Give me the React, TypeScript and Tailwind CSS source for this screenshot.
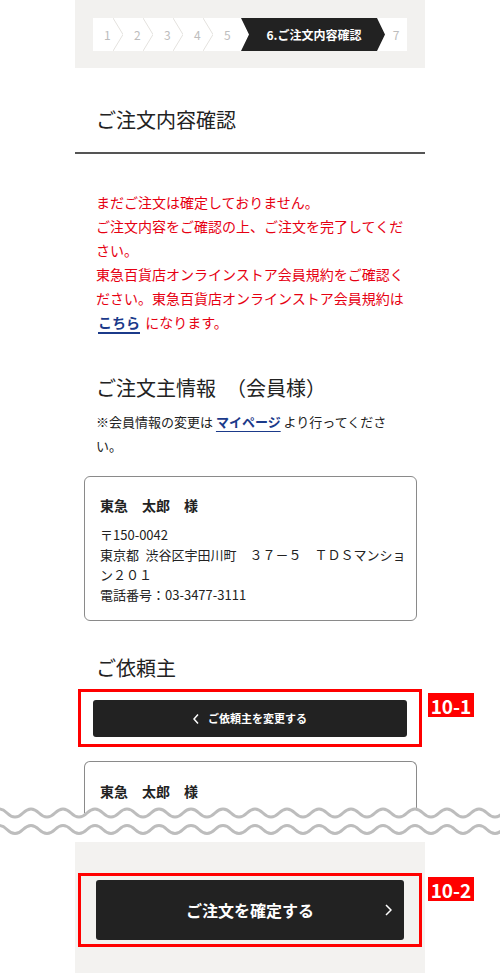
import { FC } from "react";

const StepChevron: FC = () => (
  <svg width="10" height="33" viewBox="0 0 10 33" className="shrink-0">
    <polyline points="0,0 10,16.5 0,33" fill="none" stroke="#e4e2de" strokeWidth="1" />
  </svg>
);

const wave = (y: number, x0: number) => {
  let d = `M${x0} ${y} Q${x0 + 8} ${y - 8} ${x0 + 16} ${y}`;
  for (let x = x0 + 32; x <= 530; x += 16) d += ` T${x} ${y}`;
  return d;
};

const Label: FC<{ text: string }> = ({ text }) => (
  <div className="absolute left-[calc(100%+9px)] top-[1px] flex h-[24px] w-[46px] items-center justify-center bg-[#ff0000] text-[19px] font-bold leading-none text-white">
    {text}
  </div>
);

export default function App() {
  return (
    <div className="min-h-[973px] w-[500px] bg-white font-['Noto_Sans_CJK_JP',sans-serif] text-[#222]">
      <div className="mx-auto w-[350px]">
        {/* stepper */}
        <div className="h-[68px] bg-[#f2f1ef] px-[18px] pt-[18px]">
          <div className="flex h-[33px] bg-white">
            {[1, 2, 3, 4].map((n) => (
              <div key={n} className="flex">
                <span className="w-[20px] pl-[11px] text-[12px] leading-[33px] text-[#bdbdbd]">{n}</span>
                <StepChevron />
              </div>
            ))}
            <span className="w-[28px] pl-[11px] text-[12px] leading-[33px] text-[#bdbdbd]">5</span>
            <div className="flex w-[144px] items-center justify-center bg-[#222] pl-[2px] text-[12px] font-bold text-white [clip-path:polygon(0_0,136px_0,144px_50%,136px_100%,0_100%,8px_50%)]">
              6.ご注文内容確認
            </div>
            <span className="flex-1 text-center text-[12px] leading-[33px] text-[#bdbdbd]">7</span>
          </div>
        </div>

        <h1 className="border-b-2 border-[#555] px-[21px] pb-[18px] pt-[38px] text-[20px] font-normal leading-[28px]">
          ご注文内容確認
        </h1>

        <p className="mt-[36px] pl-[21px] pr-[20px] text-[14px] leading-[24px] text-[#e60012]">
          まだご注文は確定しておりません。
          <br />
          ご注文内容をご確認の上、ご注文を完了してください。
          <br />
          東急百貨店オンラインストア会員規約をご確認ください。東急百貨店オンラインストア会員規約は{" "}
          <span className="mx-[2px] font-bold text-[#1b3a8a] underline decoration-[2px] underline-offset-[4px]">こちら</span>{" "}
          になります。
        </p>

        <h2 className="mt-[40px] px-[21px] text-[20px] font-normal leading-[28px]">ご注文主情報　（会員様）</h2>
        <p className="mt-[8px] pl-[21px] pr-[20px] text-[13px] leading-[24px]">
          ※会員情報の変更は{" "}
          <span className="font-bold text-[#1b3a8a] underline decoration-1 underline-offset-[4px]">マイページ</span>{" "}
          より行ってください。
        </p>

        <div className="ml-[9px] mr-[8px] mt-[18px] rounded-[6px] border border-[#8a8a8a] pb-[15px] pl-[15px] pr-[8px] pt-[18px]">
          <p className="text-[14px] font-bold leading-[20px]">東急　太郎　様</p>
          <div className="mt-[10px] text-[13px] leading-[20px]">
            <p>〒150-0042</p>
            <p>
              東京都{"\u2002"}渋谷区宇田川町　３７－５　ＴＤＳマンショ
              <br />
              ン２０１
            </p>
            <p>電話番号：03-3477-3111</p>
          </div>
        </div>

        <h2 className="mt-[33px] px-[21px] text-[20px] font-normal leading-[28px]">ご依頼主</h2>

        <div className="relative mx-[3px] mt-[7px] border-[3px] border-[#ff0000] px-[12px] pb-[7px] pt-[8px]">
          <button className="flex h-[37px] w-full items-center justify-center gap-[9px] rounded-[3px] bg-[#222] text-[11px] font-bold text-white">
            <svg width="6" height="10" viewBox="0 0 6 10">
              <polyline points="5,0.5 1,5 5,9.5" fill="none" stroke="white" strokeWidth="1.5" />
            </svg>
            ご依頼主を変更する
          </button>
          <Label text="10-1" />
        </div>

        <div className="ml-[9px] mr-[8px] mt-[14px] h-[52px] overflow-hidden rounded-t-[6px] border border-b-0 border-[#8a8a8a] pl-[15px] pt-[19px]">
          <p className="text-[14px] font-bold leading-[20px]">東急　太郎　様</p>
        </div>
      </div>

      {/* page break waves */}
      <svg width="500" height="36" viewBox="0 0 500 36" className="relative -mt-[7px] block">
        <path d={`${wave(7, -9)} L530 36 L-10 36 Z`} fill="white" />
        <path d={wave(7, -9)} fill="none" stroke="#bdbdbd" strokeWidth="3" />
        <path d={wave(23.5, -9)} fill="none" stroke="#bdbdbd" strokeWidth="3" />
      </svg>

      <div className="mx-auto h-[131px] w-[350px] bg-[#f3f2f0] pt-[31px]">
        <div className="relative mx-[3px] border-[3px] border-[#ff0000] p-[4px] px-[15px]">
          <button className="relative flex h-[60px] w-full items-center justify-center rounded-[3px] bg-[#222] text-[16px] font-bold text-white">
            ご注文を確定する
            <svg width="7" height="12" viewBox="0 0 7 12" className="absolute right-[12px]">
              <polyline points="1,1 6,6 1,11" fill="none" stroke="white" strokeWidth="1.5" />
            </svg>
          </button>
          <Label text="10-2" />
        </div>
      </div>
    </div>
  );
}
